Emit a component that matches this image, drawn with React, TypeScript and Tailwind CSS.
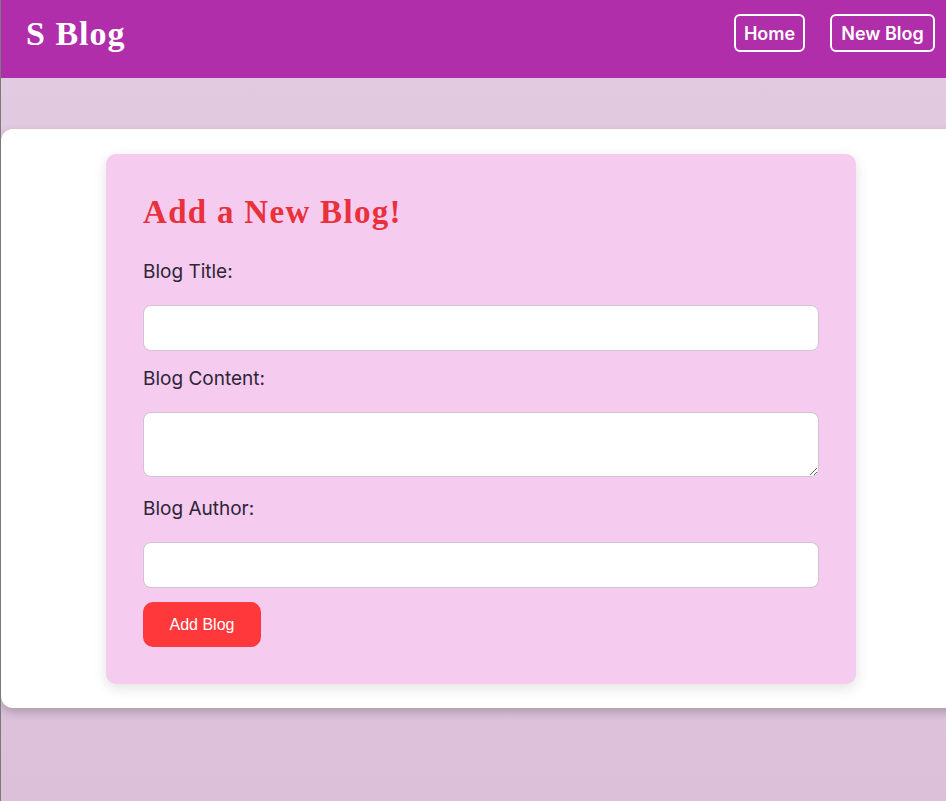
import React from "react";

export default function App() {
  return (
    <div className="min-h-[801px] w-full overflow-hidden border-l border-[#7a7a7a] bg-gradient-to-b from-[#e2cce1] to-[#dcc0d9]">
      <header className="flex h-[78px] items-start justify-between bg-[#b02ea9] pl-[25px] pr-[11px] pt-[14px]">
        <h1 className="text-[34px] font-bold leading-[40px] tracking-[1px] text-white [font-family:'Liberation_Serif',serif]">
          S Blog
        </h1>
        <nav className="flex gap-[25px] [font-family:Inter,'Noto_Sans',sans-serif]">
          <a className="flex h-[38px] w-[71px] items-center justify-center rounded-[6px] border-2 border-white text-[18px] font-semibold text-white">
            Home
          </a>
          <a className="flex h-[38px] w-[105px] items-center justify-center rounded-[6px] border-2 border-white text-[18px] font-semibold text-white">
            New Blog
          </a>
        </nav>
      </header>
      <main className="pt-[51px]">
        <div className="w-[990px] rounded-[12px] bg-white pb-[24px] pt-[25px] shadow-[0_4px_10px_rgba(0,0,0,0.22)]">
          <div className="ml-[105px] flex w-[750px] flex-col rounded-[10px] bg-[#f5cbf0] px-[37px] pb-[37px] pt-[38px] shadow-[0_4px_14px_rgba(0,0,0,0.12)]">
            <h2 className="text-[33px] font-bold leading-[40px] tracking-[1.3px] text-[#e8313b] [font-family:'Liberation_Serif',serif]">
              Add a New Blog!
            </h2>
            <label className="mt-[28px] text-[19px] leading-[24px] text-[#2e2536] [font-family:Inter,'Noto_Sans',sans-serif]">
              Blog Title:
            </label>
            <input
              type="text"
              className="mt-[21px] block h-[46px] w-full rounded-[8px] border border-[#cfc4cf] bg-white px-3"
            />
            <label className="mt-[16px] text-[19px] leading-[24px] text-[#2e2536] [font-family:Inter,'Noto_Sans',sans-serif]">
              Blog Content:
            </label>
            <textarea className="mt-[21px] block h-[65px] w-full rounded-[8px] border border-[#cfc4cf] bg-white px-3" />
            <label className="mt-[20px] text-[19px] leading-[24px] text-[#2e2536] [font-family:Inter,'Noto_Sans',sans-serif]">
              Blog Author:
            </label>
            <input
              type="text"
              className="mt-[21px] block h-[46px] w-full rounded-[8px] border border-[#cfc4cf] bg-white px-3"
            />
            <button className="mt-[14px] h-[45px] w-[118px] rounded-[10px] bg-[#ff383c] text-[16px] text-white [font-family:'Liberation_Sans',Arial,sans-serif]">
              Add Blog
            </button>
          </div>
        </div>
      </main>
    </div>
  );
}
